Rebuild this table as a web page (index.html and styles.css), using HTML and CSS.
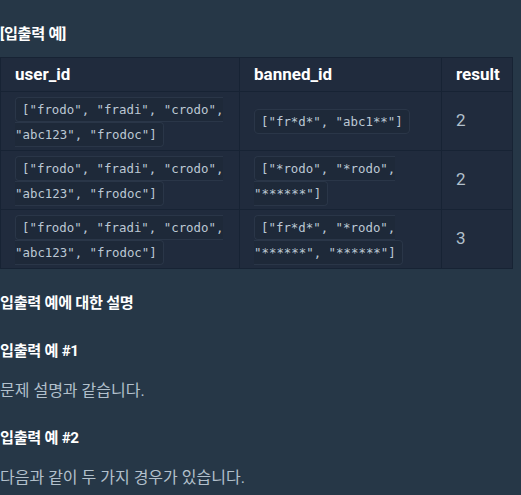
FILE: index.html
```html
<!DOCTYPE html>
<html lang="ko">
<head>
<meta charset="utf-8">
<link rel="stylesheet" href="styles.css">
</head>
<body>
<div class="guide">
  <h5 class="title first">[입출력 예]</h5>
  <table class="io-table">
    <colgroup>
      <col class="c1"><col class="c2"><col class="c3">
    </colgroup>
    <thead>
      <tr><th>user_id</th><th>banned_id</th><th>result</th></tr>
    </thead>
    <tbody>
      <tr>
        <td><code>["frodo", "fradi", "crodo", "abc123", "frodoc"]</code></td>
        <td><code>["fr*d*", "abc1**"]</code></td>
        <td>2</td>
      </tr>
      <tr>
        <td><code>["frodo", "fradi", "crodo", "abc123", "frodoc"]</code></td>
        <td><code>["*rodo", "*rodo", "******"]</code></td>
        <td>2</td>
      </tr>
      <tr>
        <td><code>["frodo", "fradi", "crodo", "abc123", "frodoc"]</code></td>
        <td><code>["fr*d*", "*rodo", "******", "******"]</code></td>
        <td>3</td>
      </tr>
    </tbody>
  </table>
  <h5 class="title after-table">입출력 예에 대한 설명</h5>
  <h5 class="title">입출력 예 #1</h5>
  <p class="text">문제 설명과 같습니다.</p>
  <h5 class="title">입출력 예 #2</h5>
  <p class="text">다음과 같이 두 가지 경우가 있습니다.</p>
</div>
</body>
</html>
```
FILE: styles.css
```css
html, body {
  margin: 0;
  padding: 0;
  background: #263747;
}
body {
  font-family: Roboto, "Noto Sans CJK KR", sans-serif;
  font-size: 16px;
  line-height: 1.6;
  color: #b2c0cc;
}
.guide {
  padding: 0;
}
.title {
  margin: 22.5px 0 0;
  font-size: 15.2px;
  font-weight: 700;
  line-height: 25.6px;
  letter-spacing: -0.3px;
  color: #ffffff;
}
.title.first {
  margin-top: 21.5px;
}
.title.after-table {
  margin-top: 22px;
}
.text {
  margin: 13.5px 0 0;
  font-size: 16px;
  line-height: 25.6px;
  color: #b2c0cc;
}
.io-table {
  margin-top: 9.5px;
  width: 512px;
  table-layout: fixed;
  border-collapse: collapse;
  background: #202b3d;
  border: 1px solid #172334;
}
.c1 { width: 239px; }
.c2 { width: 202px; }
.c3 { width: 71px; }
.io-table th,
.io-table td {
  border: 1px solid #172334;
  padding: 4px 14px;
  text-align: left;
  vertical-align: middle;
  font-size: 17px;
  line-height: 25px;
}
.io-table th {
  color: #ffffff;
  font-weight: 700;
}
.io-table td {
  color: #b2c0cc;
}
.io-table code {
  font-family: "DejaVu Sans Mono", monospace;
  font-size: 12.4px;
  line-height: 1;
  padding: 4px 6px;
  background: #1e2939;
  border: 1px solid #2a3648;
  border-radius: 4px;
  color: #bcc8d4;
}
```
